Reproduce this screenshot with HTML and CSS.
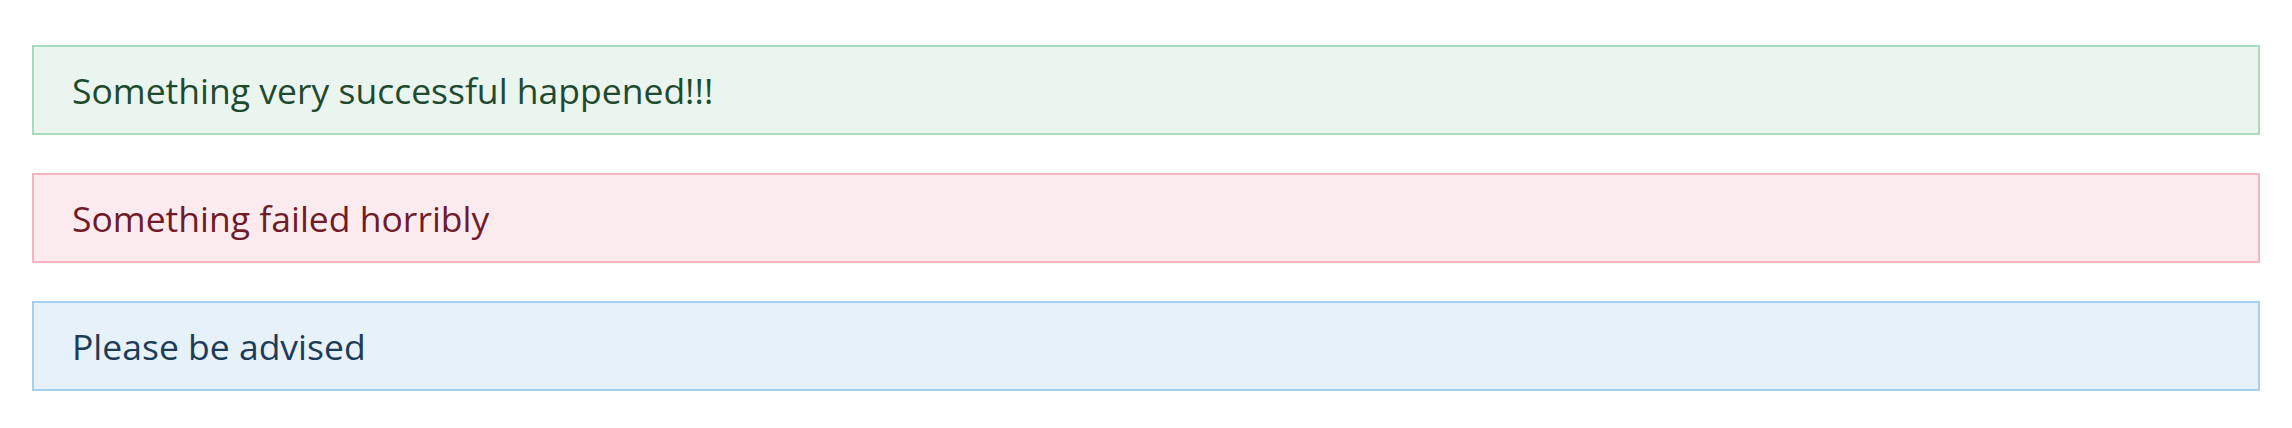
FILE: index.html
```html
<!DOCTYPE html>
<html lang="en">
<head>
<meta charset="utf-8">
<title>Alerts</title>
<link rel="stylesheet" href="styles.css">
</head>
<body>
<div class="alerts">
  <div class="alert alert-success">Something very successful happened!!!</div>
  <div class="alert alert-error">Something failed horribly</div>
  <div class="alert alert-info">Please be advised</div>
</div>
</body>
</html>
```
FILE: styles.css
```css
html, body {
  margin: 0;
  padding: 0;
  background: #ffffff;
}
body {
  font-family: "Open Sans", "Noto Sans", sans-serif;
}
.alerts {
  display: flex;
  flex-direction: column;
  gap: 38px;
  padding: 45px 32px;
}
.alert {
  box-sizing: border-box;
  height: 90px;
  display: flex;
  align-items: center;
  padding: 0 38px;
  border: 2px solid;
  font-size: 35.5px;
}
.alert-success {
  background: #ebf5ef;
  border-color: #a8dcbe;
  color: #1f4a2f;
}
.alert-error {
  background: #fcebee;
  border-color: #f5b4c0;
  color: #6f1b2a;
}
.alert-info {
  background: #e7f1fa;
  border-color: #a7d0ec;
  color: #1e3b57;
}
```
